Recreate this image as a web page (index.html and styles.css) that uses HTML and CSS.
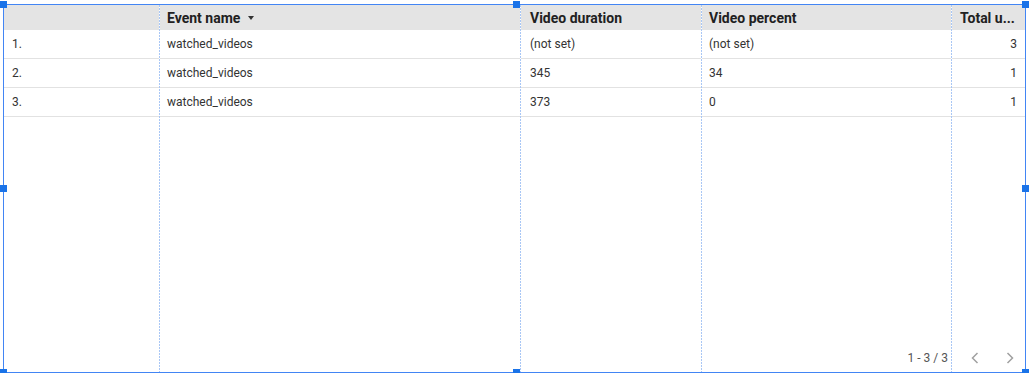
FILE: index.html
```html
<!DOCTYPE html>
<html>
<head>
<meta charset="utf-8">
<link rel="stylesheet" href="styles.css">
</head>
<body>
<div class="widget">
  <div class="grid">
    <div class="col c1">
      <div class="cell head"></div>
      <div class="cell">1.</div>
      <div class="cell">2.</div>
      <div class="cell">3.</div>
    </div>
    <div class="col c2">
      <div class="cell head">Event name <svg class="sort" width="6" height="4" viewBox="0 0 6 4"><path d="M0 0h6L3 4z" fill="#333"/></svg></div>
      <div class="cell">watched_videos</div>
      <div class="cell">watched_videos</div>
      <div class="cell">watched_videos</div>
    </div>
    <div class="col c3">
      <div class="cell head">Video duration</div>
      <div class="cell">(not set)</div>
      <div class="cell">345</div>
      <div class="cell">373</div>
    </div>
    <div class="col c4">
      <div class="cell head">Video percent</div>
      <div class="cell">(not set)</div>
      <div class="cell">34</div>
      <div class="cell">0</div>
    </div>
    <div class="col c5">
      <div class="cell head">Total u...</div>
      <div class="cell num">3</div>
      <div class="cell num">1</div>
      <div class="cell num">1</div>
    </div>
  </div>
  <div class="pager">
    <span class="range">1 - 3 / 3</span>
    <svg class="chev" width="10" height="14" viewBox="0 0 10 14"><path d="M7.5 2L2.5 7l5 5" fill="none" stroke="#a0a0a0" stroke-width="1.5"/></svg>
    <svg class="chev" width="10" height="14" viewBox="0 0 10 14"><path d="M2.5 2l5 5-5 5" fill="none" stroke="#a0a0a0" stroke-width="1.5"/></svg>
  </div>
  <span class="handle h-tl"></span>
  <span class="handle h-tm"></span>
  <span class="handle h-tr"></span>
  <span class="handle h-ml"></span>
  <span class="handle h-mr"></span>
  <span class="handle h-bl"></span>
  <span class="handle h-bm"></span>
  <span class="handle h-br"></span>
</div>
</body>
</html>
```

FILE: styles.css
```css
html, body {
  margin: 0;
  padding: 0;
  background: #ffffff;
}
body {
  font-family: Roboto, "Liberation Sans", Arial, sans-serif;
  font-size: 12px;
  color: #333333;
}
.widget {
  position: relative;
  margin: 4px 0 0 3px;
  width: 1021px;
  height: 367px;
  border: 1px solid #4285f4;
}
.grid {
  display: grid;
  grid-template-columns: 156px 361px 181px 250px 1fr;
  height: 100%;
}
.col {
  display: flex;
  flex-direction: column;
  background-image: linear-gradient(to bottom, #a9c7f5 67%, transparent 67%);
  background-size: 1px 3px;
  background-position: right top;
  background-repeat: repeat-y;
}
.c5 {
  background-image: none;
}
.cell {
  height: 28px;
  border-bottom: 1px solid #e2e2e2;
  display: flex;
  align-items: center;
  padding: 0 8px;
  white-space: nowrap;
  margin-right: 1px;
}
.head {
  height: 25px;
  border-bottom: none;
  background: #e4e4e4;
  font-weight: bold;
  font-size: 14px;
  color: #212121;
}
.c2 .cell {
  padding-left: 7px;
}
.c3 .cell {
  padding-left: 9px;
}
.c4 .cell {
  padding-left: 7px;
}
.c5 .cell {
  margin-right: 0;
}
.num {
  justify-content: flex-end;
}
.sort {
  margin-left: 8px;
  margin-top: 1px;
}
.pager {
  position: absolute;
  right: 10px;
  bottom: 7px;
  display: flex;
  align-items: center;
  color: #555555;
  font-size: 12px;
}
.range {
  margin-right: 22px;
}
.chev {
  margin-left: 25px;
}
.chev:first-of-type {
  margin-left: 0;
}
.handle {
  position: absolute;
  width: 7px;
  height: 7px;
  background: #1a73e8;
}
.h-tl { left: -4px; top: -4px; }
.h-tm { left: 509px; top: -4px; }
.h-tr { right: -4px; top: -4px; }
.h-ml { left: -4px; top: 180px; }
.h-mr { right: -4px; top: 180px; }
.h-bl { left: -4px; bottom: -4px; }
.h-bm { left: 509px; bottom: -4px; }
.h-br { right: -4px; bottom: -4px; }
```
